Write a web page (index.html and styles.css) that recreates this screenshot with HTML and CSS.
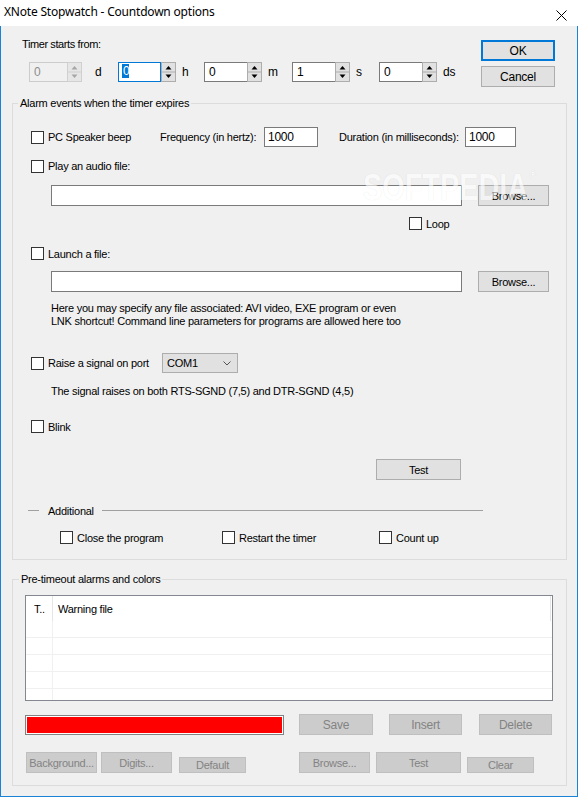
FILE: index.html
```html
<!DOCTYPE html>
<html>
<head>
<meta charset="utf-8">
<title>XNote Stopwatch - Countdown options</title>
<link rel="stylesheet" href="styles.css">
</head>
<body>
<div class="window">
  <div class="titlebar">
    <span class="title">XNote Stopwatch - Countdown options</span>
    <svg class="close" width="11" height="11" viewBox="0 0 11 11"><path d="M0.5 0.5L10.5 10.5M10.5 0.5L0.5 10.5" stroke="#000" stroke-width="1" fill="none"/></svg>
  </div>
  <div class="content">
    <div class="top">
      <div class="timer">
        <div class="timer-label">Timer starts from:</div>
        <div class="spins">
          <div class="unit u1">
            <div class="spin disabled"><span class="edit">0</span><svg class="updown" width="15" height="20" viewBox="0 0 15 20"><rect x="0.5" y="0.5" width="14" height="19" fill="#e6e6e6" stroke="#d0d0d0"/><line x1="1" y1="10" x2="14" y2="10" stroke="#d0d0d0"/><path d="M4.5 7.5h6l-3-3.5z" fill="#a6a6a6"/><path d="M4.5 12.5h6l-3 3.5z" fill="#a6a6a6"/></svg></div>
            <span class="ulabel">d</span>
          </div>
          <div class="unit u2">
            <div class="spin focused"><span class="edit"><span class="sel">0</span></span><svg class="updown" width="15" height="20" viewBox="0 0 15 20"><rect x="0.5" y="0.5" width="14" height="19" fill="#e1e1e1" stroke="#adadad"/><line x1="1" y1="10" x2="14" y2="10" stroke="#adadad"/><path d="M4.5 7.5h6l-3-3.5z" fill="#000"/><path d="M4.5 12.5h6l-3 3.5z" fill="#000"/></svg></div>
            <span class="ulabel">h</span>
          </div>
          <div class="unit u3">
            <div class="spin"><span class="edit">0</span><svg class="updown" width="15" height="20" viewBox="0 0 15 20"><rect x="0.5" y="0.5" width="14" height="19" fill="#e1e1e1" stroke="#adadad"/><line x1="1" y1="10" x2="14" y2="10" stroke="#adadad"/><path d="M4.5 7.5h6l-3-3.5z" fill="#000"/><path d="M4.5 12.5h6l-3 3.5z" fill="#000"/></svg></div>
            <span class="ulabel">m</span>
          </div>
          <div class="unit u4">
            <div class="spin"><span class="edit">1</span><svg class="updown" width="15" height="20" viewBox="0 0 15 20"><rect x="0.5" y="0.5" width="14" height="19" fill="#e1e1e1" stroke="#adadad"/><line x1="1" y1="10" x2="14" y2="10" stroke="#adadad"/><path d="M4.5 7.5h6l-3-3.5z" fill="#000"/><path d="M4.5 12.5h6l-3 3.5z" fill="#000"/></svg></div>
            <span class="ulabel">s</span>
          </div>
          <div class="unit u5">
            <div class="spin"><span class="edit">0</span><svg class="updown" width="15" height="20" viewBox="0 0 15 20"><rect x="0.5" y="0.5" width="14" height="19" fill="#e1e1e1" stroke="#adadad"/><line x1="1" y1="10" x2="14" y2="10" stroke="#adadad"/><path d="M4.5 7.5h6l-3-3.5z" fill="#000"/><path d="M4.5 12.5h6l-3 3.5z" fill="#000"/></svg></div>
            <span class="ulabel">ds</span>
          </div>
        </div>
      </div>
      <div class="dlg-buttons">
        <button class="btn btn-default">OK</button>
        <button class="btn">Cancel</button>
      </div>
    </div>

    <fieldset class="group alarm">
      <legend>Alarm events when the timer expires</legend>

      <div class="row r-speaker">
        <label class="chk w-speaker"><span class="cb"></span>PC Speaker beep</label>
        <span class="lbl-freq">Frequency (in hertz):</span>
        <span class="edit-box w-freq">1000</span>
        <span class="lbl-dur">Duration (in milliseconds):</span>
        <span class="edit-box w-dur">1000</span>
      </div>

      <div class="row r-play">
        <label class="chk"><span class="cb"></span>Play an audio file:</label>
      </div>

      <div class="row r-file">
        <span class="edit-box w-path"></span>
        <button class="btn w-browse">Browse...</button>
      </div>

      <div class="row r-loop">
        <label class="chk"><span class="cb"></span>Loop</label>
      </div>

      <div class="row r-launch">
        <label class="chk"><span class="cb"></span>Launch a file:</label>
      </div>

      <div class="row r-file2">
        <span class="edit-box w-path"></span>
        <button class="btn w-browse">Browse...</button>
      </div>

      <p class="note help">Here you may specify any file associated: AVI video, EXE program or even<br>LNK shortcut! Command line parameters for programs are allowed here too</p>

      <div class="row r-raise">
        <label class="chk w-raise"><span class="cb"></span>Raise a signal on port</label>
        <span class="combo">COM1<svg class="chev" width="8" height="5" viewBox="0 0 8 5"><path d="M0.5 0.5L4 4L7.5 0.5" stroke="#555" fill="none"/></svg></span>
      </div>

      <p class="note sig">The signal raises on both RTS-SGND (7,5) and DTR-SGND (4,5)</p>

      <div class="row r-blink">
        <label class="chk"><span class="cb"></span>Blink</label>
      </div>

      <div class="row r-test">
        <button class="btn w-test">Test</button>
      </div>

      <div class="row sep">
        <span class="line l1"></span>
        <span class="sep-text">Additional</span>
        <span class="line l2"></span>
      </div>

      <div class="row r-add">
        <label class="chk w-add1"><span class="cb"></span>Close the program</label>
        <label class="chk w-add2"><span class="cb"></span>Restart the timer</label>
        <label class="chk"><span class="cb"></span>Count up</label>
      </div>
    </fieldset>

    <fieldset class="group pre">
      <legend>Pre-timeout alarms and colors</legend>
      <div class="list">
        <div class="lv-head">
          <span class="lv-c1">T..</span>
          <span class="lv-c2">Warning file</span>
        </div>
        <div class="lv-row"><span class="lv-c1"></span><span class="lv-c2"></span></div>
        <div class="lv-row"><span class="lv-c1"></span><span class="lv-c2"></span></div>
        <div class="lv-row"><span class="lv-c1"></span><span class="lv-c2"></span></div>
        <div class="lv-row"><span class="lv-c1"></span><span class="lv-c2"></span></div>
        <div class="lv-row lv-last"><span class="lv-c1"></span><span class="lv-c2"></span></div>
      </div>

      <div class="row r-color">
        <span class="colorbar"><span class="swatch"></span></span>
        <button class="btn off w-save">Save</button>
        <button class="btn off w-insert">Insert</button>
        <button class="btn off w-delete">Delete</button>
      </div>

      <div class="row r-btns2">
        <button class="btn off w-bg">Background...</button>
        <button class="btn off w-digits">Digits...</button>
        <button class="btn off short w-default">Default</button>
        <button class="btn off w-browse2">Browse...</button>
        <button class="btn off w-test2">Test</button>
        <button class="btn off short w-clear">Clear</button>
      </div>
    </fieldset>
  </div>

  <div class="watermark">SOFTPEDIA<sup>®</sup></div>
</div>
</body>
</html>
```

FILE: styles.css
```css
* { box-sizing: border-box; }

html, body {
  margin: 0;
  padding: 0;
}

body {
  width: 578px;
  height: 797px;
  overflow: hidden;
  background: #f0f0f0;
  font-family: "Liberation Sans", Arial, sans-serif;
  font-size: 11px;
  letter-spacing: -0.25px;
  color: #000;
}

.window {
  position: relative;
  width: 578px;
  height: 797px;
  display: flex;
  flex-direction: column;
  background: #f0f0f0;
}

/* title bar */
.titlebar {
  height: 26px;
  flex-shrink: 0;
  background: #fff;
  display: flex;
  align-items: flex-start;
}

.title {
  font-family: "Noto Sans", "Open Sans", sans-serif;
  font-size: 12px;
  line-height: 16px;
  margin-top: 4px;
  padding-left: 4px;
  color: #000;
  letter-spacing: -0.2px;
}

.close {
  margin-left: auto;
  margin-right: 11px;
  margin-top: 10px;
}

/* content */
.content {
  flex: 1;
  border: 1px solid #1883d7;
  border-top: none;
  padding: 0 10px 10px 11px;
  display: flex;
  flex-direction: column;
}

.top {
  height: 71px;
  display: flex;
  flex-shrink: 0;
}

.timer {
  padding-left: 10px;
  padding-top: 12px;
}

.timer-label {
  line-height: 13px;
  height: 13px;
  letter-spacing: -0.4px;
}

.spins {
  margin-top: 11px;
  margin-left: 7px;
  display: flex;
}

.unit {
  display: flex;
  align-items: center;
  height: 20px;
}

.u1 { width: 89px; }
.u2 { width: 86px; }
.u3 { width: 88px; }
.u4 { width: 87px; }

.spin {
  display: flex;
  height: 20px;
  width: 58px;
}

.u1 .spin { width: 53px; }

.spin .edit {
  flex: 1;
  height: 20px;
  border: 1px solid #7a7a7a;
  border-right: none;
  background: #fff;
  padding-left: 4px;
  line-height: 18px;
  font-size: 12px;
}

.spin.disabled .edit {
  border-color: #cccccc;
  background: #f0f0f0;
  color: #8d8d8d;
}

.spin.focused .edit {
  border: 1px solid #0078d7;
  border-right: 1px solid #0078d7;
  padding-left: 3px;
}

.sel {
  background: #0078d7;
  color: #fff;
  display: inline-block;
  line-height: 14px;
  padding: 0 0 0 1px;
  vertical-align: 1px;
}

.updown {
  display: block;
  flex-shrink: 0;
}

.ulabel {
  margin-left: 6px;
  font-size: 12px;
}

.u1 .ulabel { margin-left: 13px; }

.dlg-buttons {
  margin-left: auto;
  margin-right: 12px;
  padding-top: 14px;
  display: flex;
  flex-direction: column;
  gap: 5px;
}

.dlg-buttons .btn {
  width: 74px;
  height: 21px;
  font-size: 12px;
}

/* buttons */
.btn {
  font-family: inherit;
  font-size: 11px;
  letter-spacing: inherit;
  color: #000;
  background: #e1e1e1;
  border: 1px solid #adadad;
  border-radius: 0;
  padding: 0;
  margin: 0;
  height: 21px;
  white-space: nowrap;
  overflow: visible;
  flex-shrink: 0;
}

.btn-default {
  border: 1px solid #0078d7;
  box-shadow: inset 0 0 0 1px #0078d7;
}

.btn.off {
  background: #cccccc;
  border-color: #bfbfbf;
  color: #838383;
}

.btn.short {
  height: 16px;
  line-height: 14px;
}

/* group boxes */
fieldset.group {
  margin: 0;
  padding: 0;
  min-width: 0;
  border: 1px solid #dcdcdc;
  flex-shrink: 0;
}

fieldset.group legend {
  padding: 0 2px;
  margin-left: 5px;
  line-height: 13px;
  height: 13px;
}

.alarm {
  padding-bottom: 15px !important;
}

.pre {
  margin-top: 13px !important;
  padding-bottom: 12px !important;
}

.pre legend {
  margin-left: 6px !important;
}

.row {
  display: flex;
  align-items: center;
}

/* checkbox */
.chk {
  display: flex;
  align-items: center;
  white-space: nowrap;
  flex-shrink: 0;
}

.cb {
  width: 13px;
  height: 13px;
  border: 1px solid #333;
  background: #fff;
  margin-right: 4px;
  flex-shrink: 0;
}

.edit-box {
  height: 20px;
  border: 1px solid #7a7a7a;
  background: #fff;
  padding-left: 3px;
  line-height: 18px;
  font-size: 12px;
  flex-shrink: 0;
}

.note {
  margin: 0;
  line-height: 13px;
  margin-left: 38px;
}

/* alarm rows */
.r-speaker { margin-top: 17px; height: 20px; }
.r-speaker .chk { margin-left: 18px; }
.w-speaker { width: 129px; }
.lbl-freq { width: 104px; white-space: nowrap; }
.w-freq { width: 54px; }
.lbl-dur { margin-left: 21px; width: 126px; white-space: nowrap; }
.w-dur { width: 51px; }

.r-play { margin-top: 12px; height: 14px; }
.r-play .chk, .r-launch .chk, .r-raise .chk, .r-blink .chk { margin-left: 18px; }

.r-file { margin-top: 12px; height: 21px; }
.r-file2 { margin-top: 11px; height: 21px; }
.w-path { margin-left: 38px; width: 411px; height: 21px; }
.w-browse { margin-left: 16px; width: 71px; height: 21px; }

.r-loop { margin-top: 11px; height: 13px; }
.r-loop .chk { margin-left: 396px; }

.r-launch { margin-top: 17px; height: 13px; }

.help { margin-top: 10px; }

.r-raise { margin-top: 25px; height: 20px; }
.w-raise { width: 131px; }

.combo {
  width: 76px;
  height: 20px;
  border: 1px solid #adadad;
  background: #e1e1e1;
  padding-left: 4px;
  display: flex;
  align-items: center;
  font-size: 11px;
}

.chev {
  margin-left: auto;
  margin-right: 6px;
}

.sig { margin-top: 12px; }

.r-blink { margin-top: 22px; height: 13px; }

.r-test { margin-top: 26px; height: 21px; }
.w-test { margin-left: 363px; width: 85px; }

.sep { margin-top: 24px; height: 13px; }
.line { height: 1px; background: #a0a0a0; display: block; }
.l1 { margin-left: 15px; width: 11px; }
.sep-text { margin-left: 9px; width: 54px; }
.l2 { width: 381px; }

.r-add { margin-top: 14px; height: 13px; }
.w-add1 { margin-left: 47px; width: 162px; }
.w-add2 { width: 157px; }

/* list view */
.list {
  margin-top: 9px;
  margin-left: 12px;
  width: 528px;
  height: 106px;
  border: 1px solid #828790;
  background: #fff;
  overflow: hidden;
}

.lv-head {
  display: flex;
  height: 25px;
  align-items: stretch;
  font-size: 11px;
}

.lv-head .lv-c1 {
  width: 27px;
  padding-left: 8px;
  border-right: 1px solid #e5e5e5;
  display: flex;
  align-items: center;
}

.lv-head .lv-c2 {
  flex: 1;
  margin-right: 1px;
  padding-left: 5px;
  border-right: 1px solid #e5e5e5;
  display: flex;
  align-items: center;
}

.lv-row {
  display: flex;
  height: 17px;
  border-bottom: 1px solid #f0f0f0;
}

.lv-row.lv-last {
  border-bottom: none;
  height: 11px;
}

.lv-row .lv-c1 {
  width: 27px;
  border-right: 1px solid #f0f0f0;
}

.lv-row .lv-c2 {
  flex: 1;
}

/* colour row */
.r-color { margin-top: 13px; height: 21px; align-items: flex-start; }

.colorbar {
  margin-left: 12px;
  margin-top: 1px;
  width: 259px;
  height: 20px;
  border: 1px solid #828282;
  background: #fff;
  padding: 1px;
  display: block;
  flex-shrink: 0;
}

.swatch {
  display: block;
  width: 100%;
  height: 100%;
  background: #ff0000;
}

.w-save { margin-left: 15px; width: 74px; font-size: 12px; }
.w-insert { margin-left: 16px; width: 73px; font-size: 12px; }
.w-delete { margin-left: 17px; width: 73px; font-size: 12px; }

.r-btns2 { margin-top: 17px; height: 21px; align-items: flex-end; }
.w-bg { margin-left: 13px; width: 71px; }
.w-digits { margin-left: 4px; width: 71px; }
.w-default { margin-left: 7px; width: 67px; }
.w-browse2 { margin-left: 53px; width: 71px; }
.w-test2 { margin-left: 6px; width: 85px; }
.w-clear { margin-left: 6px; width: 67px; }

/* watermark overlay */
.watermark {
  position: absolute;
  left: 363px;
  top: 168px;
  font-family: "Liberation Sans", Arial, sans-serif;
  font-weight: bold;
  font-size: 37px;
  line-height: 40px;
  letter-spacing: 0;
  color: #ffffff;
  opacity: 0.6;
  text-shadow: 0 0 1px rgba(0, 0, 0, 0.15);
  transform: scaleX(0.78);
  transform-origin: left top;
  pointer-events: none;
  white-space: nowrap;
}

.watermark sup {
  font-size: 12px;
  vertical-align: top;
  line-height: 14px;
  margin-left: 2px;
}
```
